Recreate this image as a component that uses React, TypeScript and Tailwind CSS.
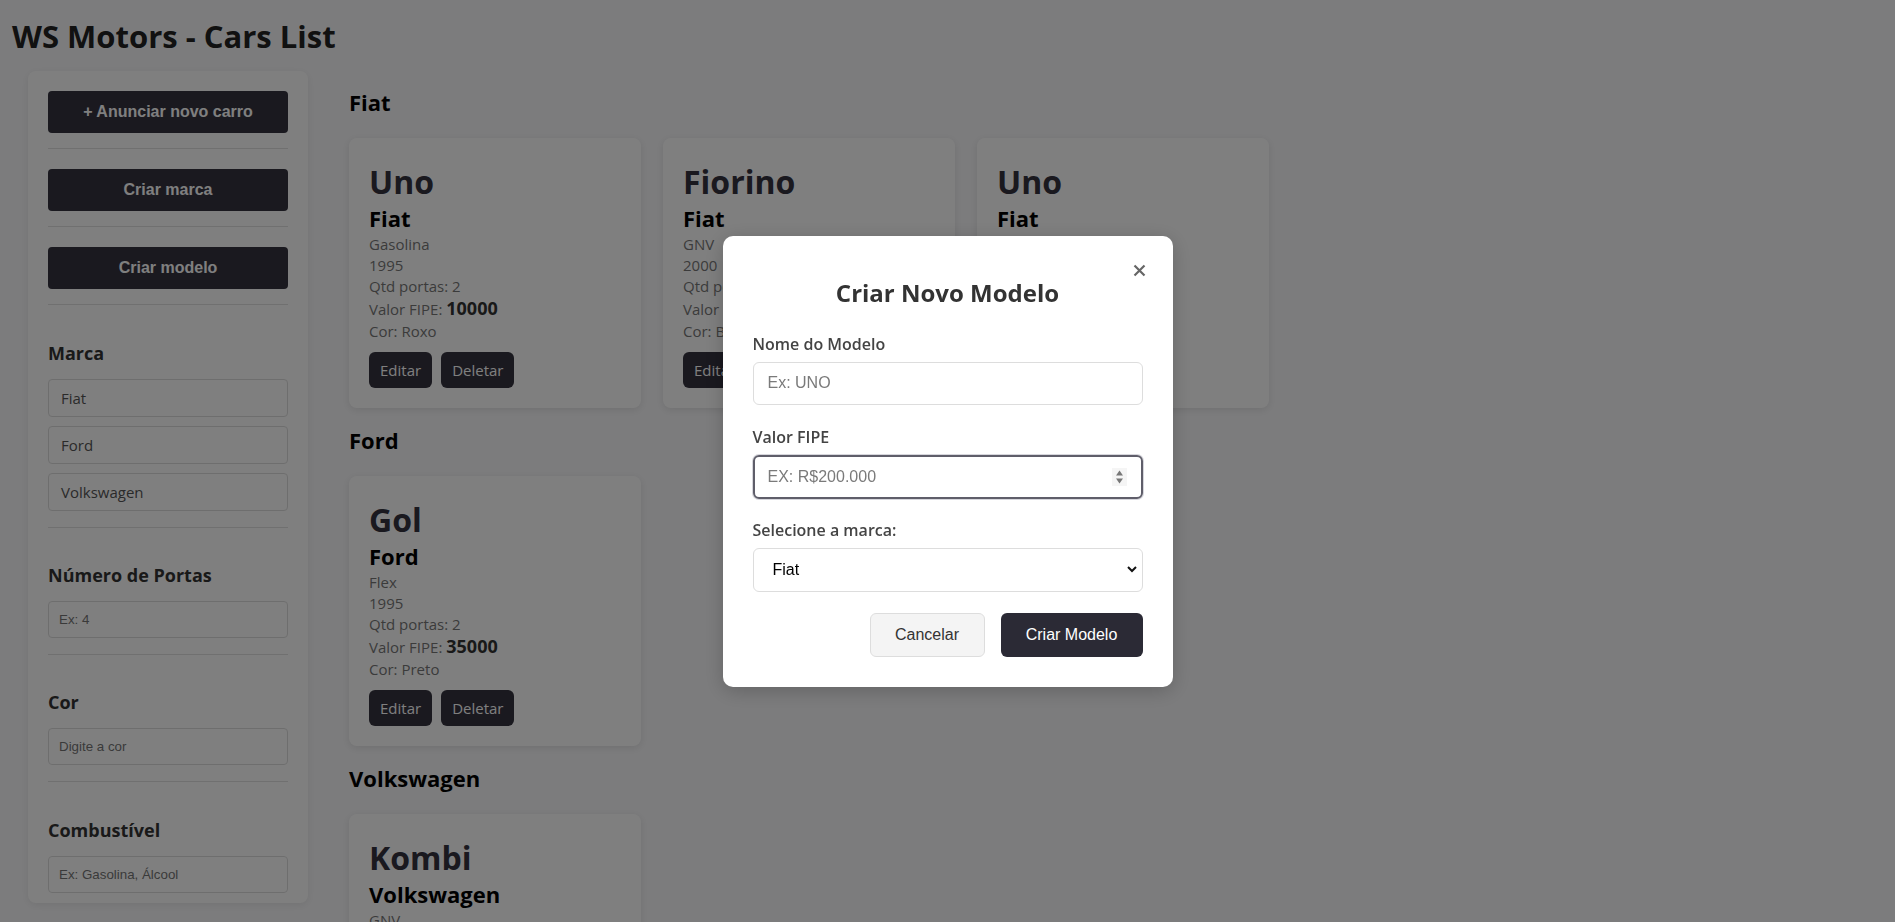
type Car = {
  model: string;
  brand: string;
  fuel: string;
  year: number;
  doors: number;
  fipe: number;
  color: string;
};

const groups: { brand: string; cars: Car[] }[] = [
  {
    brand: "Fiat",
    cars: [
      { model: "Uno", brand: "Fiat", fuel: "Gasolina", year: 1995, doors: 2, fipe: 10000, color: "Roxo" },
      { model: "Fiorino", brand: "Fiat", fuel: "GNV", year: 2000, doors: 2, fipe: 20000, color: "Branco" },
      { model: "Uno", brand: "Fiat", fuel: "Flex", year: 2010, doors: 4, fipe: 25000, color: "Prata" },
    ],
  },
  {
    brand: "Ford",
    cars: [{ model: "Gol", brand: "Ford", fuel: "Flex", year: 1995, doors: 2, fipe: 35000, color: "Preto" }],
  },
  {
    brand: "Volkswagen",
    cars: [{ model: "Kombi", brand: "Volkswagen", fuel: "GNV", year: 1990, doors: 3, fipe: 30000, color: "Azul" }],
  },
];

const CarCard = ({ car }: { car: Car }) => {
  return (
    <div className="w-[292px] shrink-0 rounded-lg bg-white px-5 pt-[24px] pb-[20px] shadow-[0_2px_8px_rgba(0,0,0,0.1)]">
      <h1 className="text-[32px] leading-[40px] font-bold text-[#34323e]">{car.model}</h1>
      <h2 className="mt-[1px] text-[22px] leading-[31px] font-bold text-black">{car.brand}</h2>
      <p className="text-[15px] leading-[21px] text-[#777]">{car.fuel}</p>
      <p className="text-[15px] leading-[21px] text-[#777]">{car.year}</p>
      <p className="text-[15px] leading-[21px] text-[#777]">Qtd portas: {car.doors}</p>
      <p className="text-[15px] leading-[23px] text-[#777]">
        Valor FIPE: <strong className="text-[18px] font-bold text-[#333]">{car.fipe}</strong>
      </p>
      <p className="text-[15px] leading-[21px] text-[#777]">Cor: {car.color}</p>
      <div className="mt-[10px] flex gap-[9px]">
        <button className="h-9 rounded-md bg-[#34323e] px-[11px] text-[15px] text-white">Editar</button>
        <button className="h-9 rounded-md bg-[#34323e] px-[11px] text-[15px] text-white">Deletar</button>
      </div>
    </div>
  );
};

const Divider = ({ className }: { className: string }) => (
  <hr className={"border-0 border-t border-[#e0e0e0] " + className} />
);

const SideButton = ({ label }: { label: string }) => (
  <button className="h-[42px] w-full rounded bg-[#34323e] font-['Liberation_Sans',Arial,sans-serif] text-[16px] font-bold text-white">
    {label}
  </button>
);

const SideInput = ({ placeholder }: { placeholder: string }) => (
  <input
    className="h-[37px] w-full rounded border border-[#ddd] bg-white px-[10px] font-['Liberation_Sans',Arial,sans-serif] text-[13.33px] text-[#333] outline-none placeholder:text-[#757575]"
    placeholder={placeholder}
  />
);

const Sidebar = () => {
  return (
    <aside className="h-[832px] w-[280px] shrink-0 overflow-hidden rounded-lg bg-white p-5 shadow-[0_2px_8px_rgba(0,0,0,0.08)]">
      <SideButton label="+ Anunciar novo carro" />
      <Divider className="mt-[15px] mb-5" />
      <SideButton label="Criar marca" />
      <Divider className="mt-[15px] mb-5" />
      <SideButton label="Criar modelo" />
      <Divider className="mt-[15px] mb-[36px]" />

      <h3 className="text-[18px] leading-6 font-bold text-[#333]">Marca</h3>
      <div className="mt-[14px] flex flex-col gap-[9px]">
        {["Fiat", "Ford", "Volkswagen"].map((b) => (
          <button key={b} className="h-[38px] w-full rounded border border-[#ddd] bg-white pl-3 text-left text-[15px] text-[#555]">
            {b}
          </button>
        ))}
      </div>
      <Divider className="mt-4 mb-[35px]" />

      <h3 className="text-[18px] leading-6 font-bold text-[#333]">Número de Portas</h3>
      <div className="mt-[14px]">
        <SideInput placeholder="Ex: 4" />
      </div>
      <Divider className="mt-4 mb-[35px]" />

      <h3 className="text-[18px] leading-6 font-bold text-[#333]">Cor</h3>
      <div className="mt-[14px]">
        <SideInput placeholder="Digite a cor" />
      </div>
      <Divider className="mt-4 mb-[36px]" />

      <h3 className="text-[18px] leading-6 font-bold text-[#333]">Combustível</h3>
      <div className="mt-[14px]">
        <SideInput placeholder="Ex: Gasolina, Álcool" />
      </div>
      <Divider className="mt-4 mb-[35px]" />
    </aside>
  );
};

const Modal = () => {
  return (
    <div className="fixed inset-0 flex items-center justify-center bg-black/50">
      <div className="relative w-[450px] rounded-[10px] bg-white p-[30px] shadow-[0_4px_20px_rgba(0,0,0,0.2)]">
        <button className="absolute top-[28px] right-[27px] text-[#666]">
          <svg width="13" height="13" viewBox="0 0 13 13" fill="none" stroke="currentColor" strokeWidth="2.2">
            <path d="M1.5 1.5L11.5 11.5M11.5 1.5L1.5 11.5" />
          </svg>
        </button>
        <h2 className="mt-3 text-center text-[24px] leading-[30px] font-bold text-[#333]">Criar Novo Modelo</h2>

        <label className="mt-[26px] block text-[16px] leading-5 font-semibold text-[#444]">Nome do Modelo</label>
        <input
          className="mt-2 h-[43px] w-full rounded-md border border-[#ddd] px-[14px] font-['Liberation_Sans',Arial,sans-serif] text-[16px] outline-none placeholder:text-[#7a7a7a]"
          placeholder="Ex: UNO"
        />

        <label className="mt-[22px] block text-[16px] leading-5 font-semibold text-[#444]">Valor FIPE</label>
        <div className="mt-2 flex h-[44px] items-center rounded-md border-2 border-[#5f5e6a] pr-[14px] pl-[13px] shadow-[0_0_0_1px_#d6d6dc]">
          <input
            className="min-w-0 flex-1 bg-transparent font-['Liberation_Sans',Arial,sans-serif] text-[16px] outline-none placeholder:text-[#7a7a7a]"
            placeholder="EX: R$200.000"
          />
          <svg width="15" height="18" viewBox="0 0 15 18">
            <rect width="15" height="18" fill="#f5f5f5" />
            <path d="M4 7.5L7.5 2.5L11 7.5Z" fill="#777" />
            <path d="M4 10.5L7.5 15.5L11 10.5Z" fill="#777" />
          </svg>
        </div>

        <label className="mt-[21px] block text-[16px] leading-5 font-semibold text-[#444]">Selecione a marca:</label>
        <div className="mt-2 flex h-[44px] items-center rounded-md border border-[#ddd] pr-[5px] pl-[19px]">
          <select className="min-w-0 flex-1 appearance-none bg-transparent font-['Liberation_Sans',Arial,sans-serif] text-[16px] text-black outline-none">
            <option>Fiat</option>
            <option>Ford</option>
            <option>Volkswagen</option>
          </select>
          <svg width="10" height="7" viewBox="0 0 10 7" fill="none" stroke="#111" strokeWidth="2">
            <path d="M1 1L5 5L9 1" />
          </svg>
        </div>

        <div className="mt-[21px] flex justify-end gap-4">
          <button className="h-[44px] w-[115px] rounded-md border border-[#ddd] bg-[#f4f4f4] font-['Liberation_Sans',Arial,sans-serif] text-[16px] text-[#333]">
            Cancelar
          </button>
          <button className="h-[44px] w-[142px] rounded-md bg-[#2b2a35] font-['Liberation_Sans',Arial,sans-serif] text-[16px] text-white">
            Criar Modelo
          </button>
        </div>
      </div>
    </div>
  );
};

export default function App() {
  return (
    <div className="h-screen overflow-hidden bg-[#f9f9fb] font-['Open_Sans',sans-serif]">
      <h1 className="pt-4 pl-3 mb-[15px] text-[31px] leading-[40px] font-bold text-[#222]">WS Motors - Cars List</h1>
      <div className="flex items-start gap-[41px] pl-[28px]">
        <Sidebar />
        <main className="flex flex-col pt-[17px]">
          {groups.map((g, i) => (
            <section key={g.brand} className={i === 0 ? "" : "mt-[18px]"}>
              <h2 className="text-[22px] leading-[28px] font-bold text-black">{g.brand}</h2>
              <div className="mt-[22px] flex gap-[22px]">
                {g.cars.map((c, j) => (
                  <CarCard key={j} car={c} />
                ))}
              </div>
            </section>
          ))}
        </main>
      </div>
      <Modal />
    </div>
  );
}
